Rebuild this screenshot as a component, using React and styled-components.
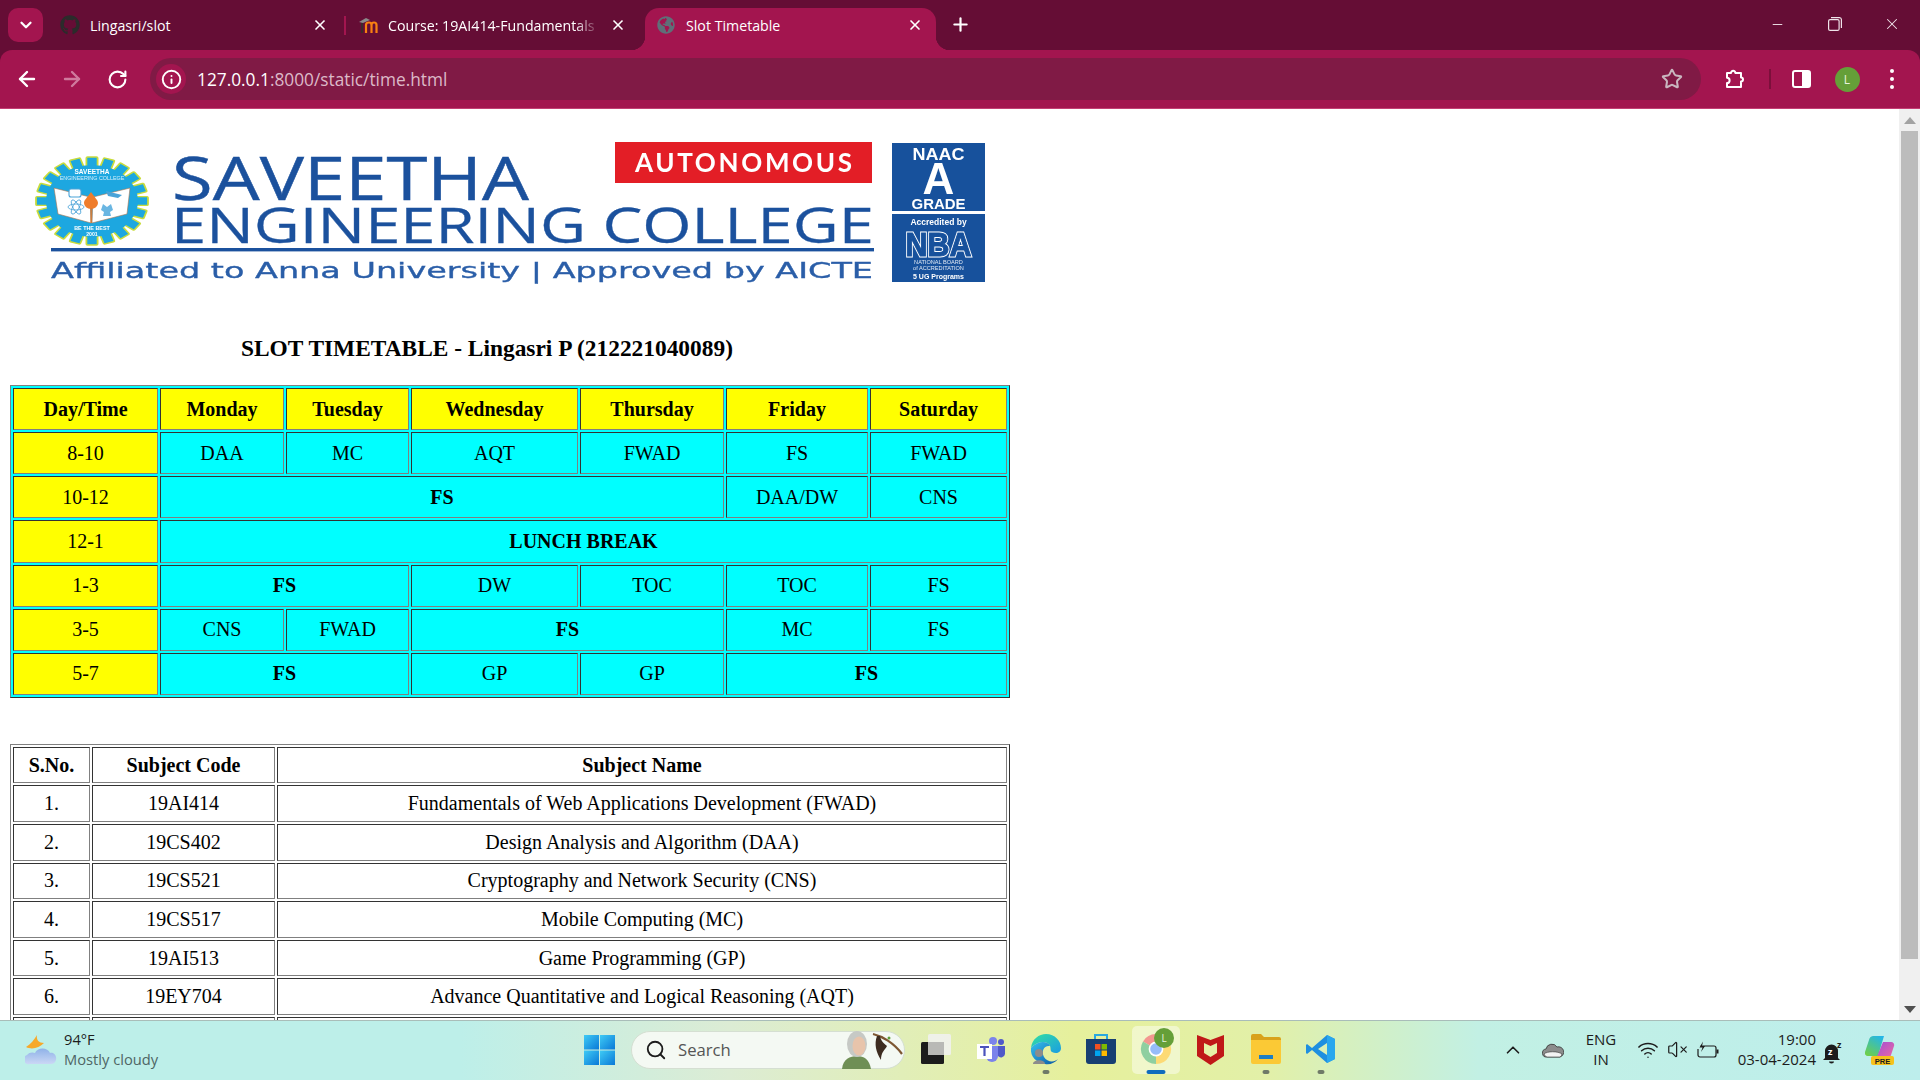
import React from 'react';
import styled, { createGlobalStyle } from 'styled-components';
import { ArrowLeft, ArrowRight, RotateCw, Info, Star, X, Plus, ChevronDown, ChevronUp, Search, Wifi, VolumeX, Minus } from 'lucide-react';
import { FaGithub, FaGlobeAmericas } from 'react-icons/fa';

const GlobalStyle = createGlobalStyle`
  html, body {
    margin: 0;
    padding: 0;
    overflow: hidden;
    background: #fff;
  }
`;

const Screen = styled.div`
  width: 1920px;
  height: 1080px;
  display: flex;
  flex-direction: column;
  overflow: hidden;
  font-family: "Open Sans", "Noto Sans", sans-serif;
`;

/* browser frame */
const TabStrip = styled.div`
  height: 50px;
  flex: none;
  display: flex;
  align-items: flex-end;
  padding-left: 8px;
  background: #650d35;
`;

const TabSearch = styled.div`
  width: 35px;
  height: 34px;
  margin: 0 6px 8px 0;
  flex: none;
  display: flex;
  align-items: center;
  justify-content: center;
  border-radius: 10px;
  background: #a3154f;
  color: #fff;
`;

const Tab = styled.div`
  position: relative;
  width: ${(p) => p.$width}px;
  height: 42px;
  flex: none;
  box-sizing: border-box;
  display: flex;
  align-items: center;
  gap: 10px;
  padding: 0 ${(p) => p.$right}px 8px ${(p) => p.$left}px;
  color: #fff;
  font-size: 14.2px;
  border-radius: 14px 14px 0 0;
  background: ${(p) => (p.$active ? '#a3154f' : 'transparent')};

  ${(p) => p.$divider && `
    &::before {
      content: "";
      position: absolute;
      left: 0;
      top: 8px;
      width: 2px;
      height: 19px;
      background: #a3154f;
    }
  `}

  ${(p) => p.$active && `
    &::before, &::after {
      content: "";
      position: absolute;
      bottom: 0;
      width: 14px;
      height: 14px;
    }
    &::before {
      left: -14px;
      background: radial-gradient(circle at 0 0, transparent 14px, #a3154f 14.5px);
    }
    &::after {
      right: -14px;
      background: radial-gradient(circle at 100% 0, transparent 14px, #a3154f 14.5px);
    }
  `}
`;

const TabIcon = styled.span`
  width: 20px;
  height: 20px;
  flex: none;
  display: flex;
  align-items: center;
  justify-content: center;
`;

const TabTitle = styled.span`
  flex: 1;
  min-width: 0;
  white-space: nowrap;
  overflow: hidden;
  ${(p) => p.$fade && `
    mask-image: linear-gradient(90deg, #000 88%, transparent 100%);
  `}
`;

const NewTab = styled.div`
  margin: 0 0 15px 14px;
  display: flex;
  color: #fff;
`;

const WindowControls = styled.div`
  margin-left: auto;
  height: 50px;
  display: flex;
  color: #f0e4ea;
`;

const WindowButton = styled.div`
  width: 57px;
  display: flex;
  align-items: center;
  justify-content: center;
  padding-bottom: 2px;
`;

const Toolbar = styled.div`
  height: 58px;
  flex: none;
  display: flex;
  align-items: center;
  gap: 21px;
  padding-left: 15px;
  box-sizing: border-box;
  border-radius: 12px 12px 0 0;
  background: #a3154f;
`;

const FrameEdge = styled.div`
  height: 1px;
  flex: none;
  background: #c43e74;
`;

const FrameBack = styled.div`
  flex: none;
  background: #650d35;
`;

const NavButton = styled.div`
  width: 24px;
  height: 24px;
  flex: none;
  display: flex;
  align-items: center;
  justify-content: center;
  color: ${(p) => (p.$dim ? '#cf7a9d' : '#fff')};
`;

const Omnibox = styled.div`
  width: 1551px;
  height: 42px;
  flex: none;
  box-sizing: border-box;
  display: flex;
  align-items: center;
  padding: 0 18px 0 6px;
  border-radius: 21px;
  background: #801a45;
`;

const InfoChip = styled.div`
  width: 30px;
  height: 30px;
  flex: none;
  display: flex;
  align-items: center;
  justify-content: center;
  border-radius: 50%;
  background: #a3154f;
  color: #fff;
`;

const UrlText = styled.div`
  margin-left: 11px;
  flex: 1;
  font-size: 17.3px;
  color: #dcb9c8;
`;

const UrlHost = styled.span`
  color: #fff;
`;

const ToolActions = styled.div`
  margin-left: -21px;
  flex: 1;
  display: flex;
  align-items: center;
`;

const ToolSlot = styled.div`
  width: ${(p) => p.$w}px;
  flex: none;
  display: flex;
  align-items: center;
  justify-content: center;
  color: #fff;
`;

const ToolDivider = styled.div`
  width: 2px;
  height: 20px;
  flex: none;
  background: #7c0f3b;
`;

const Avatar = styled.div`
  width: 25px;
  height: 25px;
  display: flex;
  align-items: center;
  justify-content: center;
  border-radius: 50%;
  background: #659f38;
  color: #e7f2dc;
  font-size: 12px;
`;

const Dots = styled.div`
  display: flex;
  flex-direction: column;
  gap: 4px;
`;

const Dot = styled.span`
  width: 4px;
  height: 4px;
  border-radius: 50%;
  background: #fff;
`;

/* page */
const ContentRow = styled.div`
  flex: 1;
  min-height: 0;
  display: flex;
  overflow: hidden;
  background: #fff;
`;

const Page = styled.main`
  flex: 1;
  min-width: 0;
  padding: 21px 0 0 10px;
  color: #000;
  font-family: "Liberation Serif", "Times New Roman", serif;
`;

const LogoArt = styled.svg`
  display: block;
  filter: blur(0.35px);
`;

const Heading = styled.h3`
  margin: 35px 0 24px;
  padding-left: 231px;
  font-size: 23.4px;
  line-height: 26px;
  font-weight: bold;
`;

const TableBox = styled.table`
  width: 1000px;
  table-layout: fixed;
  border-collapse: separate;
  border-spacing: 2px;
  border: 1px solid;
  border-color: #808080 #333 #333 #808080;
  background: ${(p) => p.$bg || 'transparent'};
  margin-top: ${(p) => p.$top || 0}px;
  font-size: 20px;
`;

const Cell = styled.td`
  box-sizing: border-box;
  height: ${(p) => p.$h}px;
  padding: 0;
  text-align: center;
  vertical-align: middle;
  border: 1px solid;
  border-color: #333 #808080 #808080 #333;
  background: ${(p) => p.$bg || 'transparent'};
  font-weight: ${(p) => (p.$bold ? 'bold' : 'normal')};
`;

const Scrollbar = styled.div`
  width: 21px;
  flex: none;
  display: flex;
  flex-direction: column;
  align-items: center;
  background: #f0f0f0;
`;

const ScrollArrow = styled.div`
  height: 22px;
  flex: none;
  display: flex;
  align-items: center;
  justify-content: center;
`;

const ScrollThumb = styled.div`
  width: 17px;
  height: 828px;
  flex: none;
  background: #bcbcbc;
`;

const ScrollFill = styled.div`
  flex: 1;
`;

/* taskbar */
const Taskbar = styled.footer`
  height: 60px;
  flex: none;
  box-sizing: border-box;
  display: flex;
  align-items: center;
  padding-bottom: 2px;
  border-top: 1px solid #a9bdb9;
  color: #1c1c1c;
  background: linear-gradient(90deg, #bdefe9 0%, #bdefe9 24%, #dcecd4 38%, #e6f09c 56%, #e2f0a8 66%, #c2f0e4 77%, #bdeeec 100%);
`;

const Weather = styled.div`
  width: 584px;
  flex: none;
  box-sizing: border-box;
  display: flex;
  align-items: center;
  gap: 7px;
  padding-left: 25px;
`;

const WeatherText = styled.div`
  font-size: 14.7px;
  line-height: 20px;
  margin-top: -2px;
`;

const WeatherSub = styled.div`
  color: #4f6665;
`;

const StartButton = styled.div`
  width: 31px;
  height: 30px;
  flex: none;
  display: flex;
`;

const SearchPill = styled.div`
  width: 274px;
  height: 38px;
  margin: 0 3px 0 16px;
  flex: none;
  box-sizing: border-box;
  display: flex;
  align-items: center;
  padding-left: 13px;
  gap: 11px;
  border: 1px solid #d5dfd2;
  border-radius: 19px;
  background: #f4f9f3;
  font-size: 16.7px;
  color: #555;
`;

const SearchWord = styled.span`
  flex: 1;
`;

const TaskSlot = styled.div`
  position: relative;
  width: 55px;
  height: 57px;
  flex: none;
  display: flex;
  align-items: center;
  justify-content: center;
  padding-bottom: 2px;
  box-sizing: border-box;

  ${(p) => p.$active && `
    &::before {
      content: "";
      position: absolute;
      left: 4px;
      right: 3px;
      top: 5px;
      bottom: 4px;
      border-radius: 5px;
      background: rgba(255, 255, 255, 0.45);
    }
  `}
`;

const TaskMark = styled.span`
  position: absolute;
  left: 50%;
  bottom: 4px;
  transform: translateX(-50%);
  width: ${(p) => (p.$active ? 19 : 7)}px;
  height: 4px;
  border-radius: 2px;
  background: ${(p) => (p.$active ? '#0f6cbd' : '#6f7a68')};
`;

const TaskBadge = styled.span`
  position: absolute;
  left: 26px;
  top: 7px;
  width: 20px;
  height: 20px;
  display: flex;
  align-items: center;
  justify-content: center;
  border-radius: 50%;
  background: #659f38;
  color: #e7f2dc;
  font-size: 10px;
`;

const Tray = styled.div`
  margin-left: auto;
  padding-right: 14px;
  display: flex;
  align-items: center;
`;

const TraySlot = styled.div`
  width: ${(p) => p.$w}px;
  margin-left: ${(p) => p.$ml || 0}px;
  flex: none;
  display: flex;
  align-items: center;
  justify-content: center;
  color: #1c1c1c;
`;

const TrayLang = styled.div`
  width: 48px;
  flex: none;
  text-align: center;
  font-size: 15px;
  line-height: 20px;
  margin-top: -2px;
`;

const Clock = styled.div`
  width: 91px;
  flex: none;
  text-align: right;
  font-size: 15px;
  line-height: 20px;
  white-space: nowrap;
  margin-top: -2px;
`;

/* drawings */
const GearTeeth = () => {
  const teeth = [];
  for (let i = 0; i < 20; i++) {
    teeth.push(<rect key={i} x="-5" y="-50" width="10" height="12" rx="1" fill="#1da7e0" stroke="#c9dc3c" strokeWidth="1.6" transform={`rotate(${i * 18})`} />);
  }
  return teeth;
};

const Logo = () => (
  <LogoArt width="1000" height="170" viewBox="10 130 1000 170">
    <g transform="translate(92 201) scale(1.12 0.88)">
      <GearTeeth />
      <circle r="41" fill="#1da7e0" />
    </g>
    <text x="92" y="174" fontFamily="Liberation Sans" fontWeight="700" fontSize="6.5" fill="#fff" textAnchor="middle">SAVEETHA</text>
    <text x="92" y="180" fontFamily="Liberation Sans" fontSize="5.4" fill="#d6effa" textAnchor="middle">ENGINEERING COLLEGE</text>
    <path d="M54 188 L90 197 L91 223 L58 214 Z" fill="#fff" stroke="#a9744f" strokeWidth="0.6" />
    <path d="M130 188 L93 197 L92 223 L127 214 Z" fill="#fff" stroke="#a9744f" strokeWidth="0.6" />
    <rect x="69" y="189" width="12" height="8" rx="2" fill="#fff" stroke="#4aa3d8" strokeWidth="1.1" />
    <path d="M106 191 L122 195 L118 198 L108 196 Z" fill="#4aa3d8" />
    <g fill="none" stroke="#4aa3d8" strokeWidth="0.8">
      <ellipse cx="76" cy="207" rx="8" ry="3" />
      <ellipse cx="76" cy="207" rx="8" ry="3" transform="rotate(60 76 207)" />
      <ellipse cx="76" cy="207" rx="8" ry="3" transform="rotate(120 76 207)" />
    </g>
    <path d="M103 204 l4 3 l4 -3 l2 6 l-3 2 l1 4 l-8 0 l1 -4 l-3 -2 Z" fill="#6ab6e2" />
    <path d="M91 192 C87 198 84 200 84 203 A7 6 0 0 0 98 203 C98 200 95 198 91 192 Z" fill="#ef7d2b" />
    <rect x="90.5" y="208" width="1.4" height="15" fill="#d97a30" />
    <text x="92" y="230" fontFamily="Liberation Sans" fontWeight="700" fontSize="5.4" fill="#fff" textAnchor="middle">BE THE BEST</text>
    <text x="92" y="236" fontFamily="Liberation Sans" fontWeight="700" fontSize="5.2" fill="#fff" textAnchor="middle">2001</text>

    <text x="172" y="200" fontFamily="Open Sans" fontWeight="500" fontSize="61" fill="#1b519d" stroke="#1b519d" strokeWidth="0.5" textLength="357" lengthAdjust="spacingAndGlyphs">SAVEETHA</text>
    <text x="171" y="243" fontFamily="Open Sans" fontWeight="500" fontSize="50" fill="#1b519d" stroke="#1b519d" strokeWidth="0.3" textLength="703" lengthAdjust="spacingAndGlyphs">ENGINEERING COLLEGE</text>
    <rect x="51" y="248" width="823" height="3.4" fill="#1b519d" />
    <text x="51" y="278" fontFamily="DejaVu Sans" fontSize="22" fill="#2a5ea8" stroke="#2a5ea8" strokeWidth="0.35" textLength="822" lengthAdjust="spacingAndGlyphs">Affiliated to Anna University | Approved by AICTE</text>

    <rect x="615" y="142" width="257" height="41" fill="#e31e26" />
    <text x="635" y="172" fontFamily="Lato" fontWeight="700" fontSize="26" fill="#fff" textLength="217" lengthAdjust="spacing">AUTONOMOUS</text>

    <rect x="892" y="143" width="93" height="68" fill="#17519c" />
    <text x="938.5" y="160" fontFamily="Liberation Sans" fontWeight="700" fontSize="16" fill="#fff" textAnchor="middle" textLength="52" lengthAdjust="spacingAndGlyphs">NAAC</text>
    <text x="938.5" y="194" fontFamily="Liberation Sans" fontWeight="700" fontSize="44" fill="#fff" textAnchor="middle">A</text>
    <text x="938.5" y="209" fontFamily="Liberation Sans" fontWeight="700" fontSize="14" fill="#fff" textAnchor="middle" textLength="54" lengthAdjust="spacingAndGlyphs">GRADE</text>

    <rect x="892" y="214" width="93" height="68" fill="#17519c" />
    <text x="938.5" y="225" fontFamily="Liberation Sans" fontWeight="700" fontSize="8.5" fill="#fff" textAnchor="middle">Accredited by</text>
    <text x="938.5" y="256" fontFamily="Liberation Sans" fontWeight="700" fontSize="34" fill="#17519c" stroke="#fff" strokeWidth="3" textAnchor="middle" textLength="66" lengthAdjust="spacingAndGlyphs">NBA</text>
    <text x="938.5" y="256" fontFamily="Liberation Sans" fontWeight="700" fontSize="34" fill="#17519c" stroke="#17519c" strokeWidth="1" textAnchor="middle" textLength="66" lengthAdjust="spacingAndGlyphs">NBA</text>
    <text x="938.5" y="264" fontFamily="Liberation Sans" fontSize="5.6" fill="#dfe8f4" textAnchor="middle">NATIONAL BOARD</text>
    <text x="938.5" y="270" fontFamily="Liberation Sans" fontSize="5.6" fill="#dfe8f4" textAnchor="middle">of ACCREDITATION</text>
    <text x="938.5" y="279" fontFamily="Liberation Sans" fontWeight="700" fontSize="7" fill="#fff" textAnchor="middle">5 UG Programs</text>
  </LogoArt>
);

const MoodleIcon = () => (
  <svg width="20" height="20" viewBox="0 0 20 20">
    <path d="M1 7 L8 3 L12 5 L5 8 Z" fill="#8a8a8a" />
    <path d="M4 18 V8" stroke="#3a2b2b" strokeWidth="2" fill="none" />
    <path d="M8 18 V10 Q8 7.5 11 7.5 Q13.5 7.5 13.5 10 V18 M13.5 10 Q13.5 7.5 16 7.5 Q18.5 7.5 18.5 10 V18" fill="none" stroke="#f98012" strokeWidth="2.2" />
  </svg>
);

const PuzzleIcon = () => (
  <svg width="24" height="24" viewBox="0 0 24 24" fill="none" stroke="#fff" strokeWidth="2" strokeLinejoin="round">
    <path d="M4 6 H8 A2.2 2.2 0 1 1 12.4 6 H18 V10.5 A2 2 0 1 1 18 14.5 V20 H4 V16 A2.6 2.6 0 1 0 4 10.8 Z" />
  </svg>
);

const SidePanelIcon = () => (
  <svg width="20" height="20" viewBox="0 0 20 20">
    <rect x="1" y="2" width="17" height="16" rx="2" fill="none" stroke="#fff" strokeWidth="2" />
    <rect x="10" y="2" width="8" height="16" fill="#fff" />
  </svg>
);

const RestoreIcon = () => (
  <svg width="14" height="14" viewBox="0 0 14 14" fill="none" stroke="#f0e4ea" strokeWidth="1.2">
    <rect x="0.6" y="2.6" width="10.5" height="10.8" rx="1.5" />
    <path d="M3 0.6 H11.5 A2 2 0 0 1 13.4 2.5 V11" />
  </svg>
);

const WeatherIcon = () => (
  <svg width="32" height="32" viewBox="0 0 32 32">
    <defs>
      <linearGradient id="cloudFill" x1="0" y1="0" x2="0" y2="1">
        <stop offset="0" stopColor="#8fb2e8" />
        <stop offset="1" stopColor="#cbd8f5" />
      </linearGradient>
    </defs>
    <path d="M12 1 C9 6 6 10 1 13 C7 16 14 14 19 9 C14 9 11 6 12 1 Z" fill="#f6a92b" />
    <path d="M5 30 A4.5 4.5 0 0 1 2 21 C4 18 8 18 10 19 C12 13 23 13 25 19 C29 18 32 22 31 26 C30 29 28 30 26 30 Z" fill="url(#cloudFill)" />
  </svg>
);

const WindowsIcon = () => (
  <svg width="31" height="30" viewBox="0 0 31 30">
    <defs>
      <linearGradient id="winBlue" x1="0" y1="0" x2="1" y2="1">
        <stop offset="0" stopColor="#3ecbf5" />
        <stop offset="1" stopColor="#0a78d7" />
      </linearGradient>
    </defs>
    <rect x="0" y="0" width="15" height="14.5" fill="url(#winBlue)" />
    <rect x="16" y="0" width="15" height="14.5" fill="url(#winBlue)" />
    <rect x="0" y="15.5" width="15" height="14.5" fill="url(#winBlue)" />
    <rect x="16" y="15.5" width="15" height="14.5" fill="url(#winBlue)" />
  </svg>
);

const SearchPortrait = () => (
  <svg width="62" height="38" viewBox="0 0 62 38">
    <path d="M0 38 C1 28 8 25 15 25 C22 25 27 28 29 38 Z" fill="#6f8f55" />
    <ellipse cx="15" cy="13" rx="10" ry="13" fill="#c6c9c5" />
    <ellipse cx="17" cy="15" rx="6.5" ry="9.5" fill="#e8c4ab" />
    <path d="M31 3 C40 5 52 12 60 23" fill="none" stroke="#7d5733" strokeWidth="2.2" />
    <path d="M35 5 C32 13 34 21 39 29 C39 21 43 19 45 15 C43 13 39 11 38 5 Z" fill="#3d2c20" />
    <circle cx="47" cy="7" r="1.5" fill="#5c9e3a" />
  </svg>
);

const TaskViewIcon = () => (
  <svg width="30" height="30" viewBox="0 0 30 30">
    <rect x="0" y="8" width="23" height="22" rx="1.5" fill="#1c1c1c" />
    <rect x="7" y="0" width="23" height="21" rx="1.5" fill="#f1f1ee" fillOpacity="0.9" />
    <rect x="7" y="8" width="16" height="13" fill="#b9b9b6" />
  </svg>
);

const TeamsIcon = () => (
  <svg width="28" height="28" viewBox="0 0 28 28">
    <circle cx="16" cy="6" r="4" fill="#7b83eb" />
    <circle cx="24" cy="7" r="3" fill="#5059c9" />
    <path d="M9 11 H21 V21 A6 6 0 0 1 9 21 Z" fill="#7b83eb" />
    <path d="M21 11 H28 V19 A4 4 0 0 1 21 21 Z" fill="#5059c9" />
    <rect x="0" y="9" width="15" height="15" fill="#fff" />
    <path d="M3 12 H12 M7.5 12 V21" stroke="#4b53bc" strokeWidth="2.2" fill="none" />
  </svg>
);

const EdgeIcon = () => (
  <svg width="32" height="32" viewBox="0 0 32 32">
    <defs>
      <linearGradient id="edgeA" x1="0" y1="0" x2="1" y2="1">
        <stop offset="0" stopColor="#35c1f1" />
        <stop offset="1" stopColor="#0c59a4" />
      </linearGradient>
      <linearGradient id="edgeB" x1="0" y1="0" x2="1" y2="1">
        <stop offset="0" stopColor="#33e0a1" />
        <stop offset="1" stopColor="#1b9de2" />
      </linearGradient>
    </defs>
    <path d="M1 15 C2 6 9 1 16 1 C25 1 31 8 31 15 C31 20 26 21 22 19 C20 18 21 15 20 13 C18 8 8 7 1 15 Z" fill="url(#edgeB)" />
    <path d="M1 15 C8 7 18 8 20 13 C14 12 11 18 14 24 C17 29 24 30 28 26 C25 30 20 32 15 31 C7 30 0 24 1 15 Z" fill="url(#edgeA)" />
    <circle cx="9" cy="20" r="4" fill="#8c8c8c" />
    <path d="M3 31 C3 26 15 26 15 31 Z" fill="#8c8c8c" />
  </svg>
);

const StoreIcon = () => (
  <svg width="30" height="32" viewBox="0 0 30 32">
    <path d="M9 6 V2 H21 V6" fill="none" stroke="#29a8e0" strokeWidth="2" />
    <path d="M0 6 H30 V28 A3 3 0 0 1 27 31 H3 A3 3 0 0 1 0 28 Z" fill="#173f72" />
    <rect x="9" y="11" width="5.5" height="5.5" fill="#f25022" />
    <rect x="15.5" y="11" width="5.5" height="5.5" fill="#7fba00" />
    <rect x="9" y="17.5" width="5.5" height="5.5" fill="#00a4ef" />
    <rect x="15.5" y="17.5" width="5.5" height="5.5" fill="#ffb900" />
  </svg>
);

const ChromeIcon = () => (
  <svg width="32" height="32" viewBox="0 0 32 32">
    <path d="M16 16 L3 8.5 A15 15 0 0 1 29 8.5 Z" fill="#ea4335" />
    <path d="M16 16 L29 8.5 A15 15 0 0 1 16 31 Z" fill="#fbbc04" />
    <path d="M16 16 L16 31 A15 15 0 0 1 3 8.5 Z" fill="#34a853" />
    <circle cx="16" cy="16" r="7.4" fill="#fff" />
    <circle cx="16" cy="16" r="5.8" fill="#4285f4" />
  </svg>
);

const McafeeIcon = () => (
  <svg width="27" height="32" viewBox="0 0 27 32">
    <path d="M0 2 L13.5 7 L27 2 V23 L13.5 32 L0 23 Z" fill="#c01818" />
    <path d="M7 10 L13.5 13 L20 10 V20 L13.5 24 L7 20 Z" fill="#e6f0a6" />
  </svg>
);

const FolderIcon = () => (
  <svg width="30" height="30" viewBox="0 0 30 30">
    <path d="M0 2 A2 2 0 0 1 2 0 H10 L13 3 H28 A2 2 0 0 1 30 5 V10 H0 Z" fill="#d9a21b" />
    <path d="M0 6 H30 V28 A2 2 0 0 1 28 30 H2 A2 2 0 0 1 0 28 Z" fill="#fbc935" />
    <rect x="8" y="21" width="14" height="4" fill="#1d7fc4" />
  </svg>
);

const VsCodeIcon = () => (
  <svg width="30" height="30" viewBox="0 0 30 30">
    <path d="M21 1 L29 5 V25 L21 29 L6 16 L1 20 L0 19 V11 L1 10 L6 14 Z M21 9 L12 15 L21 21 Z" fill="#1e8fe0" fillRule="evenodd" />
    <path d="M21 1 L29 5 V25 L21 29 Z" fill="#29a7ee" />
  </svg>
);

const TrayCloud = () => (
  <svg width="22" height="16" viewBox="0 0 22 16">
    <path d="M5 15 A4 4 0 0 1 4 7 A6 6 0 0 1 15 5 A5 5 0 0 1 18 15 Z" fill="#8c8c8c" stroke="#333" strokeWidth="0.8" />
    <path d="M2 12 C5 9 16 9 20 12 A4 4 0 0 1 18 15 H5 A4 4 0 0 1 2 12 Z" fill="#f3f3f3" stroke="#333" strokeWidth="0.6" />
  </svg>
);

const BatteryIcon = () => (
  <svg width="22" height="18" viewBox="0 0 22 18" fill="none" stroke="#1c1c1c" strokeWidth="1.2">
    <path d="M3.5 5 H17 A2 2 0 0 1 19 7 V14 A2 2 0 0 1 17 16 H3 A2 2 0 0 1 1 14 V8" />
    <rect x="19.5" y="8.5" width="2" height="4" fill="#1c1c1c" stroke="none" />
    <path d="M6 0.5 L2.5 6.5 H5.5 L4 11 L8 5 H5 Z" fill="#1c1c1c" stroke="none" />
  </svg>
);

const BellIcon = () => (
  <svg width="26" height="28" viewBox="0 0 26 28">
    <path d="M3 22 V15 A6.5 6.5 0 0 1 16 15 V22 L18 24 H1 Z" fill="#1c1c1c" />
    <path d="M7 25.5 H12 A2.5 2 0 0 1 7 25.5 Z" fill="#1c1c1c" />
    <text x="6" y="19" fontSize="9" fontFamily="Open Sans" fontWeight="700" fill="#fff">z</text>
    <text x="15" y="12" fontSize="9" fontFamily="Open Sans" fontWeight="700" fill="#1c1c1c">z</text>
  </svg>
);

const CopilotIcon = () => (
  <svg width="30" height="30" viewBox="0 0 30 30">
    <defs>
      <linearGradient id="copA" x1="0.8" y1="0" x2="0.2" y2="1">
        <stop offset="0" stopColor="#23b6e8" />
        <stop offset="1" stopColor="#6fcf4a" />
      </linearGradient>
      <linearGradient id="copB" x1="0" y1="0" x2="1" y2="1">
        <stop offset="0" stopColor="#a04fd6" />
        <stop offset="1" stopColor="#f06aa0" />
      </linearGradient>
    </defs>
    <path d="M8 1 H19 L13 21 H3 A3 3 0 0 1 0 17 L4 5 A5 5 0 0 1 8 1 Z" fill="url(#copA)" />
    <path d="M18 7 H26 A3 3 0 0 1 29 11 L26 20 A5 5 0 0 1 21 24 H11 Z" fill="url(#copB)" />
    <rect x="6" y="21" width="23" height="9" rx="2" fill="#f6c21c" />
    <text x="17.5" y="28.5" fontSize="7.6" fontFamily="Liberation Sans" fontWeight="700" fill="#1c1c1c" textAnchor="middle">PRE</text>
  </svg>
);

/* table data */
const YELLOW = '#ffff00';
const CYAN = '#00ffff';

const slotHead = ['Day/Time', 'Monday', 'Tuesday', 'Wednesday', 'Thursday', 'Friday', 'Saturday'];
const slotWidths = [145, 124, 123, 167, 144, 142, 137];
const slotRows = [
  ['8-10', [['DAA'], ['MC'], ['AQT'], ['FWAD'], ['FS'], ['FWAD']]],
  ['10-12', [['FS', 4], ['DAA/DW'], ['CNS']]],
  ['12-1', [['LUNCH BREAK', 6]]],
  ['1-3', [['FS', 2], ['DW'], ['TOC'], ['TOC'], ['FS']]],
  ['3-5', [['CNS'], ['FWAD'], ['FS', 2], ['MC'], ['FS']]],
  ['5-7', [['FS', 2], ['GP'], ['GP'], ['FS', 2]]],
];

const subjectWidths = [77, 183, 730];
const subjects = [
  ['1.', '19AI414', 'Fundamentals of Web Applications Development (FWAD)'],
  ['2.', '19CS402', 'Design Analysis and Algorithm (DAA)'],
  ['3.', '19CS521', 'Cryptography and Network Security (CNS)'],
  ['4.', '19CS517', 'Mobile Computing (MC)'],
  ['5.', '19AI513', 'Game Programming (GP)'],
  ['6.', '19EY704', 'Advance Quantitative and Logical Reasoning (AQT)'],
  ['', '', ''],
];

const SlotTable = () => (
  <TableBox $bg={CYAN}>
    <colgroup>
      {slotWidths.map((w, i) => <col key={i} style={{ width: w }} />)}
    </colgroup>
    <tbody>
      <tr>
        {slotHead.map((h) => <Cell as="th" key={h} $h={42.14} $bg={YELLOW} $bold>{h}</Cell>)}
      </tr>
      {slotRows.map(([time, cells]) => (
        <tr key={time}>
          <Cell $h={42.14} $bg={YELLOW}>{time}</Cell>
          {cells.map(([text, span], i) => (
            <Cell key={i} colSpan={span || 1} $h={42.14} $bg={CYAN} $bold={!!span}>{text}</Cell>
          ))}
        </tr>
      ))}
    </tbody>
  </TableBox>
);

const SubjectTable = () => (
  <TableBox $top={46}>
    <colgroup>
      {subjectWidths.map((w, i) => <col key={i} style={{ width: w }} />)}
    </colgroup>
    <tbody>
      <tr>
        <Cell as="th" $h={36.6} $bold>S.No.</Cell>
        <Cell as="th" $h={36.6} $bold>Subject Code</Cell>
        <Cell as="th" $h={36.6} $bold>Subject Name</Cell>
      </tr>
      {subjects.map((row, i) => (
        <tr key={i}>
          {row.map((text, j) => <Cell key={j} $h={36.6}>{text}</Cell>)}
        </tr>
      ))}
    </tbody>
  </TableBox>
);

export default function App() {
  return (
    <Screen>
      <GlobalStyle />
      <TabStrip>
        <TabSearch><ChevronDown size={18} strokeWidth={3} /></TabSearch>
        <Tab $width={295} $left={11} $right={16}>
          <TabIcon><FaGithub size={20} color="#2b2b2b" /></TabIcon>
          <TabTitle>Lingasri/slot</TabTitle>
          <X size={16} strokeWidth={2.5} />
        </Tab>
        <Tab $width={301} $left={14} $right={19} $divider>
          <TabIcon><MoodleIcon /></TabIcon>
          <TabTitle $fade>Course: 19AI414-Fundamentals</TabTitle>
          <X size={16} strokeWidth={2.5} />
        </Tab>
        <Tab $width={291} $left={11} $right={13} $active>
          <TabIcon><FaGlobeAmericas size={18} color="#5f6f78" /></TabIcon>
          <TabTitle>Slot Timetable</TabTitle>
          <X size={16} strokeWidth={2.5} />
        </Tab>
        <NewTab><Plus size={21} strokeWidth={2.5} /></NewTab>
        <WindowControls>
          <WindowButton><Minus size={15} strokeWidth={1.5} /></WindowButton>
          <WindowButton><RestoreIcon /></WindowButton>
          <WindowButton><X size={18} strokeWidth={1.4} /></WindowButton>
        </WindowControls>
      </TabStrip>
      <FrameBack>
        <Toolbar>
          <NavButton><ArrowLeft size={24} strokeWidth={2.4} /></NavButton>
          <NavButton $dim><ArrowRight size={24} strokeWidth={2.4} /></NavButton>
          <NavButton><RotateCw size={21} strokeWidth={2.4} /></NavButton>
          <Omnibox>
            <InfoChip><Info size={21} strokeWidth={2.2} /></InfoChip>
            <UrlText><UrlHost>127.0.0.1</UrlHost>:8000/static/time.html</UrlText>
            <Star size={22} strokeWidth={2.2} color="#c9b6bf" />
          </Omnibox>
          <ToolActions>
            <ToolSlot $w={68}><PuzzleIcon /></ToolSlot>
            <ToolDivider />
            <ToolSlot $w={62}><SidePanelIcon /></ToolSlot>
            <ToolSlot $w={28}><Avatar>L</Avatar></ToolSlot>
            <ToolSlot $w={62}>
              <Dots><Dot /><Dot /><Dot /></Dots>
            </ToolSlot>
          </ToolActions>
        </Toolbar>
      </FrameBack>
      <FrameEdge />

      <ContentRow>
        <Page>
          <Logo />
          <Heading>SLOT TIMETABLE - Lingasri P (212221040089)</Heading>
          <SlotTable />
          <SubjectTable />
        </Page>
        <Scrollbar>
          <ScrollArrow>
            <svg width="12" height="7" viewBox="0 0 12 7"><path d="M6 0 L12 7 H0 Z" fill="#a3a3a3" /></svg>
          </ScrollArrow>
          <ScrollThumb />
          <ScrollFill />
          <ScrollArrow>
            <svg width="12" height="7" viewBox="0 0 12 7"><path d="M0 0 H12 L6 7 Z" fill="#505050" /></svg>
          </ScrollArrow>
        </Scrollbar>
      </ContentRow>

      <Taskbar>
        <Weather>
          <WeatherIcon />
          <WeatherText>
            94°F
            <WeatherSub>Mostly cloudy</WeatherSub>
          </WeatherText>
        </Weather>
        <StartButton><WindowsIcon /></StartButton>
        <SearchPill>
          <Search size={22} strokeWidth={2} color="#1c1c1c" />
          <SearchWord>Search</SearchWord>
          <SearchPortrait />
        </SearchPill>
        <TaskSlot><TaskViewIcon /></TaskSlot>
        <TaskSlot><TeamsIcon /></TaskSlot>
        <TaskSlot><EdgeIcon /><TaskMark /></TaskSlot>
        <TaskSlot><StoreIcon /></TaskSlot>
        <TaskSlot $active>
          <ChromeIcon />
          <TaskBadge>L</TaskBadge>
          <TaskMark $active />
        </TaskSlot>
        <TaskSlot><McafeeIcon /></TaskSlot>
        <TaskSlot><FolderIcon /><TaskMark /></TaskSlot>
        <TaskSlot><VsCodeIcon /><TaskMark /></TaskSlot>
        <Tray>
          <TraySlot $w={32}><ChevronUp size={22} strokeWidth={1.8} /></TraySlot>
          <TraySlot $w={48}><TrayCloud /></TraySlot>
          <TrayLang>ENG<br />IN</TrayLang>
          <TraySlot $w={30} $ml={8}><Wifi size={22} strokeWidth={1.6} /></TraySlot>
          <TraySlot $w={28}><VolumeX size={21} strokeWidth={1.4} /></TraySlot>
          <TraySlot $w={34}><BatteryIcon /></TraySlot>
          <Clock>19:00<br />03-04-2024</Clock>
          <TraySlot $w={38}><BellIcon /></TraySlot>
          <TraySlot $w={52}><CopilotIcon /></TraySlot>
        </Tray>
      </Taskbar>
    </Screen>
  );
}
